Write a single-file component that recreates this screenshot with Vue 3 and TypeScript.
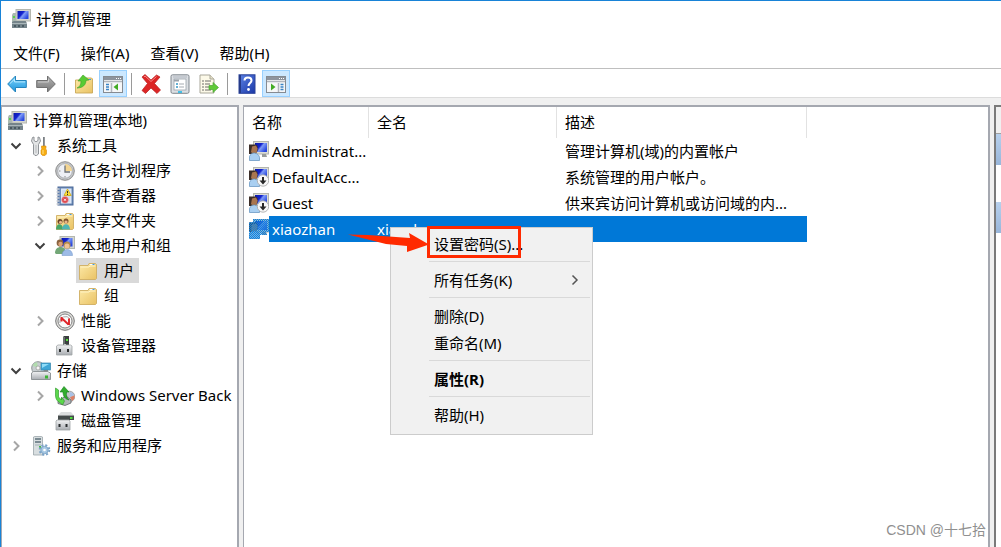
<script setup lang="ts">
import { ref } from 'vue'

interface TreeNode {
  label: string
  icon: string
  level: number
  state?: 'open' | 'closed'
  selected?: boolean
}
interface Account {
  name: string
  fullName: string
  description: string
  icon: string
  selected?: boolean
}
interface Tool {
  id: string
  label: string
  active?: boolean
}
interface MenuEntry {
  label: string
  submenu?: boolean
  bold?: boolean
}

const menus: string[] = ['文件(F)', '操作(A)', '查看(V)', '帮助(H)']

const toolGroups: Tool[][] = [
  [
    { id: 'back', label: '后退' },
    { id: 'forward', label: '前进' },
  ],
  [
    { id: 'up', label: '上一级' },
    { id: 'tree-pane', label: '显示/隐藏控制台树', active: true },
  ],
  [
    { id: 'delete', label: '删除' },
    { id: 'properties', label: '属性' },
    { id: 'export', label: '导出列表' },
  ],
  [
    { id: 'help', label: '帮助' },
    { id: 'action-pane', label: '显示/隐藏操作窗格', active: true },
  ],
]

const nodes = ref<TreeNode[]>([
  { label: '计算机管理(本地)', icon: 'computer', level: 0 },
  { label: '系统工具', icon: 'tools', level: 1, state: 'open' },
  { label: '任务计划程序', icon: 'clock', level: 2, state: 'closed' },
  { label: '事件查看器', icon: 'events', level: 2, state: 'closed' },
  { label: '共享文件夹', icon: 'shared', level: 2, state: 'closed' },
  { label: '本地用户和组', icon: 'users', level: 2, state: 'open' },
  { label: '用户', icon: 'folder', level: 3, selected: true },
  { label: '组', icon: 'folder', level: 3 },
  { label: '性能', icon: 'performance', level: 2, state: 'closed' },
  { label: '设备管理器', icon: 'devices', level: 2 },
  { label: '存储', icon: 'storage', level: 1, state: 'open' },
  { label: 'Windows Server Back', icon: 'backup', level: 2, state: 'closed' },
  { label: '磁盘管理', icon: 'disk', level: 2 },
  { label: '服务和应用程序', icon: 'services', level: 1, state: 'closed' },
])

const accounts = ref<Account[]>([
  { name: 'Administrat...', fullName: '', description: '管理计算机(域)的内置帐户', icon: 'user' },
  { name: 'DefaultAcc...', fullName: '', description: '系统管理的用户帐户。', icon: 'user-off' },
  { name: 'Guest', fullName: '', description: '供来宾访问计算机或访问域的内...', icon: 'user-off' },
  { name: 'xiaozhan', fullName: 'xiaozhan', description: '', icon: 'user-sel', selected: true },
])

const contextMenu: MenuEntry[][] = [
  [{ label: '设置密码(S)...' }],
  [{ label: '所有任务(K)', submenu: true }],
  [{ label: '删除(D)' }, { label: '重命名(M)' }],
  [{ label: '属性(R)', bold: true }],
  [{ label: '帮助(H)' }],
]
</script>

<template>
  <div class="window">
    <svg class="sprite" aria-hidden="true">
      <defs>
        <linearGradient id="g-screen" x1="0" y1="0" x2="1" y2="0.6">
          <stop offset="0" stop-color="#0a18a8" />
          <stop offset="0.45" stop-color="#1424d0" />
          <stop offset="0.6" stop-color="#7f9cf6" />
          <stop offset="1" stop-color="#2a49e0" />
        </linearGradient>
        <linearGradient id="g-blue" x1="0" y1="0" x2="0" y2="1">
          <stop offset="0" stop-color="#7fd4fb" />
          <stop offset="1" stop-color="#1c94dc" />
        </linearGradient>
        <linearGradient id="g-gray" x1="0" y1="0" x2="0" y2="1">
          <stop offset="0" stop-color="#b4b4b4" />
          <stop offset="1" stop-color="#777" />
        </linearGradient>
        <linearGradient id="g-folder" x1="0" y1="0" x2="1" y2="1">
          <stop offset="0" stop-color="#fdeaa8" />
          <stop offset="1" stop-color="#e9c264" />
        </linearGradient>
        <linearGradient id="g-help" x1="0" y1="0" x2="1" y2="1">
          <stop offset="0" stop-color="#5c83e6" />
          <stop offset="1" stop-color="#1a37a6" />
        </linearGradient>
        <linearGradient id="g-metal" x1="0" y1="0" x2="0" y2="1">
          <stop offset="0" stop-color="#f2f3f4" />
          <stop offset="1" stop-color="#a9adb2" />
        </linearGradient>
        <pattern id="p-dither" width="2" height="2" patternUnits="userSpaceOnUse">
          <rect width="1" height="1" fill="#0078d7" />
          <rect x="1" y="1" width="1" height="1" fill="#0078d7" />
        </pattern>
      </defs>

      <symbol id="computer" viewBox="0 0 20 20">
        <path d="M2 4h4v10H1V6z" fill="#a9b8b0" />
        <rect x="2" y="7" width="2" height="2" fill="#59d04a" />
        <rect x="5" y="0.5" width="14.5" height="11.5" fill="#d3d5ce" stroke="#b4b7af" />
        <rect x="6.5" y="2" width="11" height="8" fill="url(#g-screen)" />
        <path d="M10 12h5v2h-5z" fill="#8b8f8c" />
        <path d="M1 13l2-1h11l2 2v5H1z" fill="#75848a" />
        <path d="M1 14h15v1H1z" fill="#aab7ba" />
        <path d="M3 16h2v2H3zM7 16h2v2H7zM11 16h2v2h-2z" fill="#4a5a62" />
      </symbol>

      <symbol id="tools" viewBox="0 0 20 20">
        <path d="M1.500 1.500L3 1v3.500l2 1.300 2-1.300V1l1.500.5L9.500 5 7.500 8.500V18l-2 1.500H4L2.500 18V8.500L.5 5z" fill="#e2e4e5" stroke="#85898d" stroke-width="0.900" />
        <path d="M5 9v8" stroke="#b7babd" />
        <path d="M12 1h1.800v9H12z" fill="#7b8085" />
        <path d="M10.500 10h4.500v2l-.5 1 1 1v4l-1.500 1.500h-2.500L10 18v-4l1-1-.5-1z" fill="#f7ad12" stroke="#d78a0a" stroke-width="0.600" />
        <path d="M12 14v4" stroke="#ffe288" />
      </symbol>

      <symbol id="clock" viewBox="0 0 20 20">
        <circle cx="10" cy="10" r="9.300" fill="#c3c5c7" stroke="#8c8c8c" />
        <circle cx="10" cy="10" r="7.200" fill="#eef0f5" stroke="#9a9ea3" stroke-width="0.600" />
        <path d="M10 10V3a7 7 0 0 1 7 7z" fill="#f2d491" />
        <path d="M10 4.500V11h5" fill="none" stroke="#6d7276" stroke-width="1.300" />
        <path d="M10 15v1.500M4 10h1.500" stroke="#888" />
      </symbol>

      <symbol id="events" viewBox="0 0 20 20">
        <rect x="3" y="1" width="15" height="18" fill="#6d8cb8" stroke="#4a6898" />
        <rect x="6" y="2.500" width="10.500" height="15" fill="#dde7f6" />
        <path d="M7 5h8M7 7h8M7 9h8M7 11h8M7 13h8M7 15h8" stroke="#bccce4" stroke-width="0.800" />
        <path d="M1.500 3h3M1.500 6h3M1.500 9h3M1.500 12h3M1.500 15h3M1.500 18h3" stroke="#c9cdd3" stroke-width="1.400" />
        <path d="M12.500 3l3.700 6.500H9z" fill="#ffe038" stroke="#caa100" stroke-width="0.700" />
        <path d="M12.500 5v2.300M12.500 8v1" stroke="#333" />
        <circle cx="10" cy="13.800" r="3.400" fill="#dc4b50" stroke="#f4aaae" stroke-width="0.500" />
        <path d="M9 12.800l2 2M11 12.800l-2 2" stroke="#fff" stroke-width="0.900" />
      </symbol>

      <symbol id="folder" viewBox="0 0 20 20">
        <path d="M1.500 4.500h8.500l1-2h6.500l1 1v14l-1 1h-16z" fill="url(#g-folder)" stroke="#cfae62" stroke-width="0.900" />
        <path d="M11.500 4l.5-1h4.500v1z" fill="#fff" />
        <path d="M14.500 3h2v1h-2z" fill="#3f9ae8" />
        <path d="M2.500 6h8.500l1-1h5.500" stroke="#fff3c6" fill="none" />
      </symbol>

      <symbol id="shared" viewBox="0 0 20 20">
        <use href="#folder" width="20" height="20" />
        <circle cx="5" cy="10.500" r="2.500" fill="#6b4427" />
        <circle cx="5.500" cy="11.200" r="1.500" fill="#e8b88c" />
        <path d="M1 18.500c0-7 7-7 7 0z" fill="#47a667" />
        <circle cx="11" cy="10" r="2.500" fill="#80552f" />
        <circle cx="11" cy="11" r="1.600" fill="#e8b88c" />
        <path d="M7 18.500c0-7 8-7 8 0z" fill="#4eb5b4" />
      </symbol>

      <symbol id="users" viewBox="0 0 20 20">
        <rect x="5" y="0.500" width="14.500" height="12" fill="#d5d7d1" stroke="#b4b7af" />
        <rect x="6.500" y="2" width="11" height="8.500" fill="url(#g-screen)" />
        <circle cx="5" cy="7" r="3.400" fill="#8a6340" />
        <circle cx="5.500" cy="8" r="2.200" fill="#dba278" />
        <path d="M0 17c0-8 11-8 11 0l-3 1H1z" fill="#73a777" />
        <circle cx="12" cy="9" r="3.500" fill="#b38a4a" />
        <circle cx="12" cy="10" r="2.500" fill="#efc295" />
        <path d="M7 19.500c0-8 10.500-8 10.500 0z" fill="#9dbbe6" stroke="#6f93c9" stroke-width="0.500" />
      </symbol>

      <symbol id="performance" viewBox="0 0 20 20">
        <circle cx="10" cy="10" r="9.300" fill="#dededb" stroke="#757575" />
        <circle cx="10" cy="10" r="7" fill="#fafafa" stroke="#777" stroke-width="0.900" />
        <path d="M5 12a5.500 5.500 0 0 1 10-4" fill="none" stroke="#aaa" />
        <path d="M6 6.500L13.500 13.500M6.500 6v4.500M14 14V7.500" fill="none" stroke="#df2327" stroke-width="1.900" />
      </symbol>

      <symbol id="devices" viewBox="0 0 20 20">
        <path d="M8 1l1-1h5v10H8z" fill="#3b403f" />
        <path d="M8 1h2v8H8z" fill="#69706e" />
        <rect x="11" y="3" width="2" height="2" fill="#55df3b" />
        <path d="M9 8h2v3H9z" fill="#d7dcdd" />
        <path d="M1.500 10l1.500-1h12.500l1.500 1v9H1.500z" fill="url(#g-metal)" stroke="#a0a3a5" stroke-width="0.800" />
        <path d="M4 13h2v3H4zM12 13h2v3h-2z" fill="#292d2e" />
      </symbol>

      <symbol id="storage" viewBox="0 0 20 20">
        <circle cx="7" cy="7" r="6.300" fill="#c7cdcf" stroke="#8d9496" />
        <path d="M7 7L1.500 4.500A6 6 0 0 1 6 1z" fill="#b1dcae" />
        <circle cx="7" cy="7" r="2" fill="#f5f5f5" stroke="#8c8c8c" stroke-width="0.600" />
        <rect x="10" y="2" width="9.500" height="7" fill="#3fa6d6" stroke="#3685ac" stroke-width="0.700" />
        <path d="M11 3h7L11 7z" fill="#8fdcf8" />
        <path d="M13 9h4v2h-4z" fill="#7d888d" />
        <path d="M.5 12l2-1.500h14l3 1.500v6.500H.5z" fill="url(#g-metal)" stroke="#7e8487" stroke-width="0.800" />
        <rect x="14" y="14.500" width="3" height="3" fill="#3bb433" />
      </symbol>

      <symbol id="backup" viewBox="0 0 20 20">
        <circle cx="14.500" cy="10.500" r="5.300" fill="#c1c4c9" stroke="#8b8e92" stroke-width="0.700" />
        <path d="M15 11l4.500-1.500A5 5 0 0 1 17 15z" fill="#dc8067" />
        <path d="M15 11V6a5 5 0 0 1 4 3z" fill="#a9c1e7" />
        <path d="M3 15l8-5 5 4v3l-6 2.500-7-2z" fill="#b1b6b8" stroke="#5e6366" stroke-width="0.800" />
        <path d="M0.500 2l3 2v7l3 3V11l3 4-2 4-2-2c-4-2-5-5-5-8z" fill="#5dd84c" stroke="#249422" stroke-width="0.600" />
        <path d="M5 6l4-5.500L14 6h-2.500c-.5 4 .5 6 2.500 8-4-1-6-4-6-8z" fill="#32ad2e" stroke="#16811b" stroke-width="0.600" />
      </symbol>

      <symbol id="disk" viewBox="0 0 20 20">
        <path d="M6 1h10l3 3.500H3z" fill="#dcdedf" />
        <path d="M3 4.500h16V9H3z" fill="#454b4b" />
        <rect x="15" y="6" width="2.500" height="2" fill="#4fdb3d" />
        <path d="M1 10l1-1h12l1 1v9H1z" fill="url(#g-metal)" stroke="#a0a3a5" stroke-width="0.800" />
        <path d="M3.500 13h2v3h-2zM10.500 13h2v3h-2z" fill="#292d2e" />
      </symbol>

      <symbol id="services" viewBox="0 0 20 20">
        <path d="M2.500 1l1-.5h7l1 .5v18h-9z" fill="#d8dee0" stroke="#9aa5aa" stroke-width="0.800" />
        <path d="M4 3h6M4 6h6" stroke="#5c7079" stroke-width="1.300" />
        <path d="M4 9h6" stroke="#a3b1b7" />
        <rect x="8" y="10" width="2" height="2" fill="#46bb45" />
        <circle cx="13.500" cy="14" r="4.800" fill="none" stroke="#7ba3c7" stroke-width="2" stroke-dasharray="2 1.800" />
        <circle cx="13.500" cy="14" r="3.700" fill="#a9cae4" stroke="#7fa6c9" />
        <circle cx="13.500" cy="14" r="1.300" fill="#fff" />
      </symbol>

      <symbol id="user" viewBox="0 0 20 20">
        <rect x="4.500" y="0.500" width="15" height="12.500" fill="#dbdcd6" stroke="#b4b6af" />
        <rect x="6" y="2" width="12" height="9" fill="url(#g-screen)" />
        <path d="M13 13h4l1 3h-5z" fill="#999d9c" />
        <path d="M0 3.500h6.500l2 1.500v5l-2 3H0z" fill="#3c2e28" />
        <path d="M3 5.500l4-1 1.500 3-1 4.500-3 1.500L2 11z" fill="#a9764f" />
        <path d="M0.500 19.500v-4c1-3 3-3.500 4.500-3.500s5 1 5.500 4.500v3z" fill="#a9cff1" stroke="#5d8ebb" stroke-width="0.700" />
      </symbol>

      <symbol id="user-off" viewBox="0 0 20 20">
        <use href="#user" width="20" height="20" />
        <circle cx="14" cy="13.500" r="5.700" fill="#f8f8f8" stroke="#a3a5a5" stroke-width="0.800" />
        <path d="M13 10h2v3.500h2.500L14 17.500l-3.500-4H13z" fill="#282828" />
      </symbol>

      <symbol id="user-sel" viewBox="0 0 20 20">
        <use href="#user" width="20" height="20" />
        <path d="M0 3h4V0h16v13h-3l1 3h-7v4H0z" fill="url(#p-dither)" />
        <path d="M0 3h4V0h16v13h-3l1 3h-7v4H0z" fill="#2a8fe0" opacity="0.450" />
      </symbol>

      <symbol id="back" viewBox="0 0 20 20">
        <path d="M0.700 10L8.500 2v4.500H19.300v7H8.500V18z" fill="url(#g-blue)" stroke="#2384bd" />
        <path d="M3 9.500l4.500-4.300v2.700h10.500" fill="none" stroke="#b8eaff" />
      </symbol>
      <symbol id="forward" viewBox="0 0 20 20">
        <path d="M19.300 10L11.500 2v4.500H0.700v7h10.800V18z" fill="url(#g-gray)" stroke="#707070" />
        <path d="M2 8h10.500V5.200" fill="none" stroke="#c9c9c9" />
      </symbol>
      <symbol id="up" viewBox="0 0 20 20">
        <path d="M1.500 6h9l1-2h6l1 1v14h-17z" fill="url(#g-folder)" stroke="#c9a858" stroke-width="0.900" />
        <path d="M14.500 5h2.500v1h-2.500z" fill="#3f9ae8" />
        <path d="M3 14c3-1 4-4 4-7H4l5-6 6 5-3 .5c0 4-3 7.500-9 7.500z" fill="#58cb34" stroke="#3f9f2a" stroke-width="0.600" />
      </symbol>
      <symbol id="tree-pane" viewBox="0 0 20 20">
        <rect x="0.500" y="2.500" width="19" height="16" fill="#f6f7f8" stroke="#858b92" />
        <path d="M1 3h18v3H1z" fill="#8d949e" />
        <path d="M13 4.500h1M15 4.500h1M17 4.500h1" stroke="#fff" />
        <path d="M1 7.500h18M8.500 9v9" stroke="#b1b6bd" stroke-width="1.500" />
        <path d="M3 10.500h3M3 13h3M3 15.500h3" stroke="#3984c6" stroke-width="1.300" />
        <path d="M15 9.500v7l-4.500-3.500z" fill="#42ac24" />
      </symbol>
      <symbol id="action-pane" viewBox="0 0 20 20">
        <rect x="0.500" y="2.500" width="19" height="16" fill="#f6f7f8" stroke="#858b92" />
        <path d="M1 3h18v3H1z" fill="#8d949e" />
        <path d="M13 4.500h1M15 4.500h1M17 4.500h1" stroke="#fff" />
        <path d="M1 7.500h18M12.500 9v9" stroke="#b1b6bd" stroke-width="1.500" />
        <path d="M14.500 10.500h3M14.500 13h3M14.500 15.500h3" stroke="#3984c6" stroke-width="1.300" />
        <path d="M5 9.500v7L9.500 13z" fill="#42ac24" />
      </symbol>
      <symbol id="delete" viewBox="0 0 20 20">
        <path d="M1 3l3-2.500L10 6l5.500-5L19 3l-5.500 6.500L19.500 16 16 19.500l-6-5.500-5.500 5.500L1 16.500l5.500-7z" fill="#dc2626" stroke="#b82020" stroke-width="0.700" />
        <path d="M3 3l1-1 6 5.500 5.500-5" fill="none" stroke="#f88484" />
      </symbol>
      <symbol id="properties" viewBox="0 0 20 20">
        <rect x="1" y="0.800" width="18" height="18.500" rx="1.500" fill="#dcdfe3" stroke="#7f868d" />
        <path d="M3 3h14" stroke="#b6bcc4" stroke-width="1.200" />
        <rect x="4" y="5" width="12" height="11" fill="#fff" stroke="#9aa2ab" stroke-width="0.800" />
        <path d="M4 6.500h5" stroke="#9aa2ab" stroke-width="2" />
        <path d="M6 10h2M6 13h2" stroke="#3696c6" stroke-width="1.300" />
        <path d="M9 10h5M9 13h5" stroke="#a6abb2" stroke-width="1.200" />
        <path d="M8 18h4" stroke="#20b8e8" stroke-width="1.600" />
      </symbol>
      <symbol id="export" viewBox="0 0 20 20">
        <path d="M1 1h10l4 4v14H1z" fill="#fcf9e8" stroke="#a9a79a" />
        <path d="M11 1v4h4" fill="#e7e2c8" stroke="#a9a79a" />
        <path d="M3 7h2M3 10h2M3 13h2M3 16h2M6 7h6M6 10h5M6 13h4M6 16h6" stroke="#6d6d69" />
        <path d="M10 11.500h4V8.500l5.500 5-5.500 5v-3h-4z" fill="#5fca38" stroke="#4aa534" stroke-width="0.700" />
      </symbol>
      <symbol id="help" viewBox="0 0 20 20">
        <rect x="2" y="0.800" width="16" height="18.500" fill="url(#g-help)" stroke="#2a429a" />
        <path d="M3 1v18" stroke="#263b89" stroke-width="2" />
        <path d="M7.500 6.500c0-4 7-4 7 0 0 2.500-3 2.700-3 5.500" fill="none" stroke="#fff" stroke-width="2" />
        <circle cx="11.500" cy="15.500" r="1.400" fill="#fff" />
      </symbol>
    </svg>

    <header class="titlebar">
      <svg class="icon"><use href="#computer" /></svg>
      <h1>计算机管理</h1>
    </header>

    <nav class="menubar">
      <button v-for="menu in menus" :key="menu" type="button">{{ menu }}</button>
    </nav>

    <div class="toolbar" role="toolbar">
      <div v-for="(group, i) in toolGroups" :key="i" class="tool-group">
        <button
          v-for="tool in group"
          :key="tool.id"
          type="button"
          class="tool"
          :class="{ active: tool.active }"
          :aria-label="tool.label"
        >
          <svg class="icon"><use :href="'#' + tool.id" /></svg>
        </button>
      </div>
    </div>

    <main class="workspace">
      <section class="pane tree" role="tree">
        <div
          v-for="node in nodes"
          :key="node.label"
          class="node"
          :class="['level-' + node.level, { selected: node.selected }]"
          role="treeitem"
          :aria-selected="!!node.selected"
        >
          <span v-if="node.level" class="twisty">
            <svg v-if="node.state === 'open'" width="12" height="12" viewBox="0 0 12 12">
              <path d="M1.500 3.500L6 8l4.500-4.500" fill="none" stroke="#404040" stroke-width="2" />
            </svg>
            <svg v-else-if="node.state === 'closed'" width="12" height="12" viewBox="0 0 12 12">
              <path d="M4 1.500L8.500 6 4 10.500" fill="none" stroke="#a6a6a6" stroke-width="2" />
            </svg>
          </span>
          <span class="node-body">
            <svg class="icon"><use :href="'#' + node.icon" /></svg>
            <span class="node-label">{{ node.label }}</span>
          </span>
        </div>
      </section>

      <section class="pane list">
        <table>
          <colgroup>
            <col class="col-name" />
            <col class="col-full" />
            <col class="col-desc" />
          </colgroup>
          <thead>
            <tr>
              <th scope="col">名称</th>
              <th scope="col">全名</th>
              <th scope="col">描述</th>
            </tr>
          </thead>
          <tbody>
            <tr v-for="account in accounts" :key="account.name" :class="{ selected: account.selected }">
              <td class="name-cell">
                <div class="name">
                  <svg class="icon"><use :href="'#' + account.icon" /></svg>
                  <span>{{ account.name }}</span>
                </div>
              </td>
              <td>{{ account.fullName }}</td>
              <td>{{ account.description }}</td>
            </tr>
          </tbody>
        </table>
        <p class="credit">CSDN @十七拾</p>
      </section>

      <aside class="pane actions">
        <div class="actions-head"></div>
        <div class="actions-band"></div>
        <div class="actions-gap"></div>
        <div class="actions-band"></div>
      </aside>
    </main>

    <div class="context-menu" role="menu">
      <div v-for="(group, i) in contextMenu" :key="i" class="menu-group">
        <button
          v-for="entry in group"
          :key="entry.label"
          type="button"
          role="menuitem"
          :class="{ bold: entry.bold }"
        >
          <span>{{ entry.label }}</span>
          <svg v-if="entry.submenu" width="12" height="12" viewBox="0 0 12 12">
            <path d="M3.500 1.500L8 6l-4.500 4.500" fill="none" stroke="#555" stroke-width="1.500" />
          </svg>
        </button>
      </div>
    </div>

    <svg class="arrow" width="82" height="22" viewBox="0 0 82 22" aria-hidden="true">
      <path d="M0 2.500L20 3l42 3-1-5 20 11.500L59 20v-6l-21-2z" fill="#ff2a00" />
    </svg>
    <div class="highlight"></div>
  </div>
</template>

<style>
html,
body,
#app {
  height: 100%;
}
body {
  margin: 0;
}
</style>

<style scoped>
.window {
  position: relative;
  box-sizing: border-box;
  height: 100%;
  display: flex;
  flex-direction: column;
  overflow: hidden;
  border: solid #1883d7;
  border-width: 1px 0 0 1px;
  background: #fff;
  color: #000;
  font: 15px/20px 'Noto Sans', 'Noto Sans CJK SC', sans-serif;
}
.sprite {
  position: absolute;
  width: 0;
  height: 0;
}
.icon {
  flex: none;
  width: 20px;
  height: 20px;
}
button {
  margin: 0;
  padding: 0;
  border: 0;
  background: none;
  color: inherit;
  font: inherit;
}
.titlebar {
  display: flex;
  align-items: center;
  gap: 5px;
  height: 36px;
  padding-left: 10px;
}
.titlebar h1 {
  margin: 0;
  font: inherit;
}
.menubar {
  display: flex;
  align-items: center;
  gap: 21px;
  height: 31px;
  padding-left: 12px;
  border-bottom: 1px solid #bfbfbf;
}
.toolbar {
  display: flex;
  align-items: flex-end;
  height: 28px;
  padding-left: 2px;
  border-bottom: 1px solid #dcdcdc;
}
.tool-group {
  display: flex;
  align-items: center;
  gap: 1px;
}
.tool-group + .tool-group::before {
  content: '';
  width: 1px;
  height: 22px;
  margin: 0 4px;
  background: #9a9a9a;
}
.tool {
  box-sizing: border-box;
  display: flex;
  align-items: center;
  justify-content: center;
  width: 28px;
  height: 27px;
  padding-top: 1px;
  border: 1px solid transparent;
}
.tool.active {
  border-color: #99d1ff;
  background: #cce8ff;
}
.workspace {
  flex: 1;
  min-height: 0;
  display: flex;
  gap: 4px;
  padding-top: 7px;
  background: #f0f0f0;
}
.pane {
  box-sizing: border-box;
  overflow: hidden;
  border: 2px solid #a5a8b0;
  border-bottom: 0;
  background: #fff;
}
.tree {
  flex: none;
  width: 238px;
  padding-top: 1px;
  border-left-width: 1px;
}
.node {
  display: flex;
  align-items: center;
  height: 25px;
  white-space: nowrap;
}
.node-label {
  padding-bottom: 2px;
}
.level-0 {
  padding-left: 5px;
}
.level-1 {
  padding-left: 8px;
}
.level-2 {
  padding-left: 32px;
}
.level-3 {
  padding-left: 53px;
}
.twisty {
  flex: none;
  display: flex;
  width: 21px;
}
.node-body {
  display: flex;
  align-items: center;
  gap: 6px;
  height: 25px;
  padding-right: 5px;
}
.level-3 .node-body {
  padding-left: 2px;
}
.selected .node-body {
  background: #d9d9d9;
}
.list {
  flex: 1;
  min-width: 0;
  display: flex;
  flex-direction: column;
  justify-content: space-between;
  border-left-width: 1px;
}
table {
  width: 563px;
  border-spacing: 0;
  table-layout: fixed;
}
.col-name {
  width: 125px;
}
.col-full {
  width: 188px;
}
th,
td {
  height: 26px;
  padding: 0 0 0 8px;
  text-align: left;
  font-weight: normal;
  white-space: nowrap;
}
th {
  height: 29px;
  padding-bottom: 2px;
  border-right: 1px solid #e2e2e2;
}
td.name-cell {
  padding-left: 5px;
}
.name {
  display: flex;
  align-items: center;
}
.name span {
  flex: 1;
  padding-left: 3px;
  line-height: 26px;
}
tr.selected td {
  background: #0078d7;
  color: #fff;
}
tr.selected td.name-cell {
  background: none;
}
tr.selected .name span {
  background: #0078d7;
}
.credit {
  margin: 0;
  padding: 0 2px 7px 0;
  color: #909090;
  font-size: 14px;
  font-family: 'Liberation Sans', 'Noto Sans CJK SC', sans-serif;
  text-align: right;
}
.actions {
  flex: none;
  width: 7px;
  border-color: #7a7a7a;
  border-right: 0;
}
.actions-head {
  height: 26px;
  border-bottom: 1px solid #a0a0a0;
  background: #f0f0f0;
}
.actions-band {
  height: 31px;
  background: linear-gradient(#b7d0ec, #98b6da);
}
.actions-gap {
  height: 37px;
}
.context-menu {
  position: absolute;
  top: 226px;
  left: 389px;
  box-sizing: border-box;
  width: 203px;
  padding: 2px 2px 6px 38px;
  border: 1px solid #ccc;
  background: #f1f1f1;
}
.menu-group + .menu-group {
  margin-top: 4px;
  padding-top: 4px;
  border-top: 1px solid #d9d9d9;
}
.menu-group button {
  display: flex;
  align-items: center;
  justify-content: space-between;
  width: 100%;
  height: 27px;
  padding: 0 9px 0 5px;
}
.menu-group .bold {
  font-weight: bold;
}
.arrow {
  position: absolute;
  top: 231px;
  left: 347px;
}
.highlight {
  position: absolute;
  top: 225px;
  left: 426px;
  box-sizing: border-box;
  width: 94px;
  height: 32px;
  border: 3px solid #ff2a00;
}
</style>
